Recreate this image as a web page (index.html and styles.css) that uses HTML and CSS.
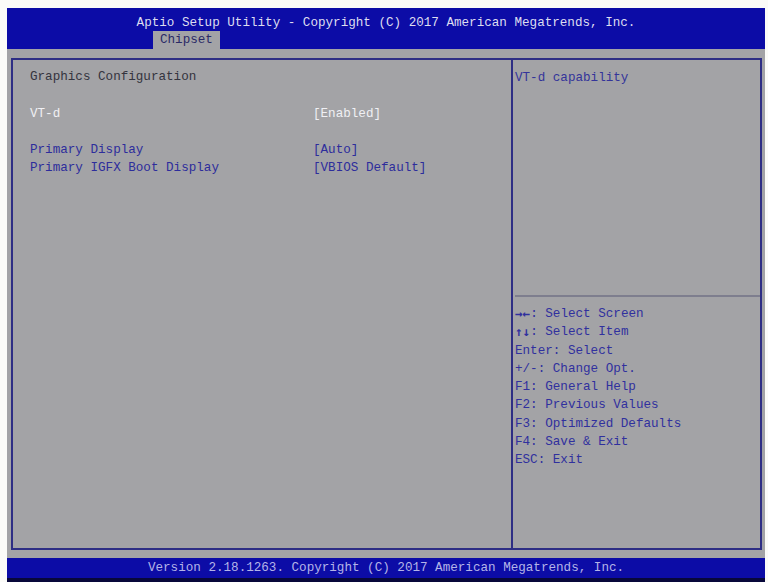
FILE: index.html
```html
<!DOCTYPE html>
<html>
<head>
<meta charset="utf-8">
<link rel="stylesheet" href="styles.css">
</head>
<body>
<div class="screen">
  <div class="topbar">
    <div class="title">Aptio Setup Utility - Copyright (C) 2017 American Megatrends, Inc.</div>
    <div class="tabs"><span class="tab">Chipset</span></div>
  </div>
  <div class="main">
    <div class="frame">
      <div class="left">
        <div class="line heading">Graphics Configuration</div>
        <div class="line"></div>
        <div class="line item selected"><span class="label">VT-d</span><span class="value">[Enabled]</span></div>
        <div class="line"></div>
        <div class="line item"><span class="label">Primary Display</span><span class="value">[Auto]</span></div>
        <div class="line item"><span class="label">Primary IGFX Boot Display</span><span class="value">[VBIOS Default]</span></div>
      </div>
      <div class="right">
        <div class="help-top">
          <div class="line">VT-d capability</div>
        </div>
        <div class="sep"></div>
        <div class="help-keys">
          <div class="line"><span class="arrow">→←</span>: Select Screen</div>
          <div class="line"><span class="arrow">↑↓</span>: Select Item</div>
          <div class="line">Enter: Select</div>
          <div class="line">+/-: Change Opt.</div>
          <div class="line">F1: General Help</div>
          <div class="line">F2: Previous Values</div>
          <div class="line">F3: Optimized Defaults</div>
          <div class="line">F4: Save &amp; Exit</div>
          <div class="line">ESC: Exit</div>
        </div>
      </div>
    </div>
  </div>
  <div class="bottombar">Version 2.18.1263. Copyright (C) 2017 American Megatrends, Inc.</div>
</div>
</body>
</html>
```
FILE: styles.css
```css
html, body {
  margin: 0;
  padding: 0;
  background: #fbfbf8;
}
body {
  font-family: "Liberation Mono", "DejaVu Sans Mono", monospace;
  font-size: 12.6px;
}
.screen {
  margin: 8px 0 0 7px;
  width: 758px;
  height: 574px;
  display: flex;
  flex-direction: column;
  background: #a3a3a6;
}
.topbar {
  background: #0c0ca6;
  height: 41px;
  display: flex;
  flex-direction: column;
}
.title {
  padding-top: 7px;
  height: 16px;
  line-height: 16px;
  text-align: center;
  color: #dedef0;
  white-space: pre;
}
.tabs {
  padding-left: 146px;
  display: flex;
}
.tab {
  height: 18px;
  line-height: 18px;
  padding: 0 7px;
  background: #a3a3a6;
  color: #2a2a66;
}
.main {
  flex: 1;
  padding: 9px 3px 8px 4px;
  display: flex;
}
.frame {
  flex: 1;
  border: 2px solid #2e2e84;
  display: grid;
  grid-template-columns: 500px 1fr;
}
.left {
  border-right: 2px solid #2e2e84;
  padding: 8px 0 0 17px;
}
.line {
  height: 18.3px;
  line-height: 18.3px;
  white-space: pre;
}
.heading {
  color: #34343e;
}
.item {
  display: flex;
  color: #2d2d9c;
}
.item .label {
  width: 283px;
}
.item.selected {
  color: #f0f0f4;
}
.right {
  display: flex;
  flex-direction: column;
}
.help-top {
  height: 235px;
  padding: 9px 0 0 2px;
  box-sizing: border-box;
  color: #34349a;
}
.sep {
  height: 2px;
  margin-left: 2px;
  background: #7e7e8e;
}
.help-keys {
  padding: 8px 0 0 2px;
  color: #30309e;
}
.arrow {
  display: inline-block;
  width: 15.2px;
  overflow: hidden;
  vertical-align: top;
  font-family: "DejaVu Sans Mono", monospace;
  font-weight: bold;
  font-size: 12.6px;
}
.bottombar {
  height: 20px;
  line-height: 20px;
  background: #0c0ca6;
  border-bottom: 4px solid #08083a;
  text-align: center;
  color: #b4b4e8;
  white-space: pre;
}
```
